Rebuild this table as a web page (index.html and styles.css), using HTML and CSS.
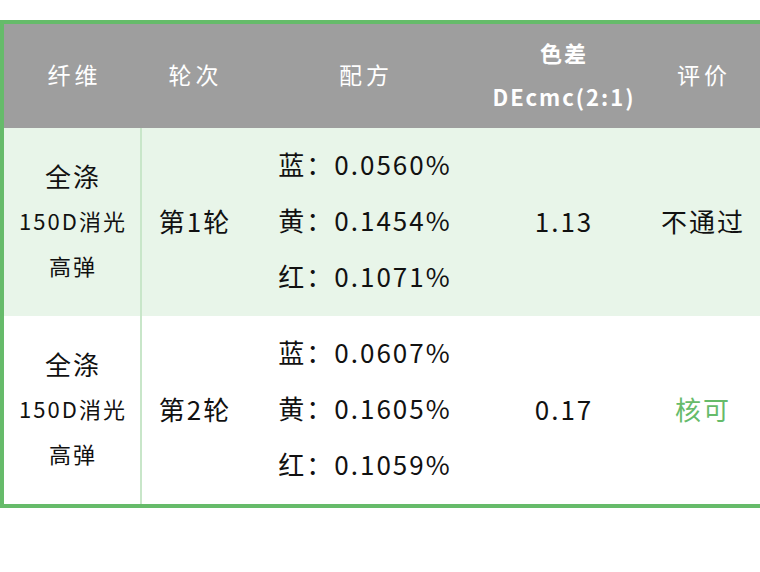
FILE: index.html
```html
<!DOCTYPE html>
<html lang="zh">
<head>
<meta charset="utf-8">
<link rel="stylesheet" href="styles.css">
</head>
<body>
<div class="wrap">
  <table class="tbl">
    <colgroup>
      <col class="c1"><col class="c2"><col class="c3"><col class="c4"><col class="c5">
    </colgroup>
    <thead>
      <tr>
        <th>纤维</th>
        <th>轮次</th>
        <th>配方</th>
        <th class="bold"><div class="hl">色差</div><div class="hl">DEcmc(2:1)</div></th>
        <th>评价</th>
      </tr>
    </thead>
    <tbody>
      <tr class="alt">
        <td class="fiber"><div class="big">全涤</div><div class="sm">150D消光</div><div class="sm">高弹</div></td>
        <td class="round">第1轮</td>
        <td class="formula"><div class="fl">蓝：0.0560%</div><div class="fl">黄：0.1454%</div><div class="fl">红：0.1071%</div></td>
        <td class="val">1.13</td>
        <td class="eval">不通过</td>
      </tr>
      <tr>
        <td class="fiber"><div class="big">全涤</div><div class="sm">150D消光</div><div class="sm">高弹</div></td>
        <td class="round">第2轮</td>
        <td class="formula"><div class="fl">蓝：0.0607%</div><div class="fl">黄：0.1605%</div><div class="fl">红：0.1059%</div></td>
        <td class="val">0.17</td>
        <td class="eval ok">核可</td>
      </tr>
    </tbody>
  </table>
</div>
</body>
</html>
```

FILE: styles.css
```css
html, body {
  margin: 0;
  padding: 0;
  background: #ffffff;
}
body {
  font-family: "Noto Sans CJK SC", "Noto Sans", sans-serif;
  color: #111111;
  letter-spacing: 2px;
}
.wrap {
  margin-top: 20px;
  width: 760px;
  border-top: 4px solid #66bb6a;
  border-left: 4px solid #66bb6a;
  border-bottom: 4px solid #66bb6a;
  overflow: hidden;
}
.tbl {
  border-collapse: collapse;
  table-layout: fixed;
  width: 756px;
}
.c1 { width: 137px; }
.c2 { width: 105px; }
.c3 { width: 236px; }
.c4 { width: 162px; }
.c5 { width: 116px; }
thead th {
  background: #9e9e9e;
  color: #ffffff;
  font-weight: 400;
  font-size: 23px;
  letter-spacing: 4px;
  height: 104px;
  padding: 0 0 4px 4px;
  box-sizing: border-box;
  text-align: center;
  vertical-align: middle;
}
thead th.bold {
  font-weight: 700;
  font-size: 22px;
  letter-spacing: 2px;
  padding-left: 2px;
}
.hl {
  line-height: 44px;
}
tbody td {
  height: 188px;
  padding: 0 0 4px 2px;
  box-sizing: border-box;
  text-align: center;
  vertical-align: middle;
  font-size: 26px;
}
tbody tr.alt td {
  background: #e8f5e9;
}
td.fiber {
  border-right: 2px solid #c8e6c9;
}
.big {
  font-size: 26px;
  line-height: 45px;
}
.sm {
  font-size: 22px;
  line-height: 45px;
}
.fl {
  line-height: 56px;
  font-size: 26px;
}
.eval.ok {
  color: #66bb6a;
}
```
